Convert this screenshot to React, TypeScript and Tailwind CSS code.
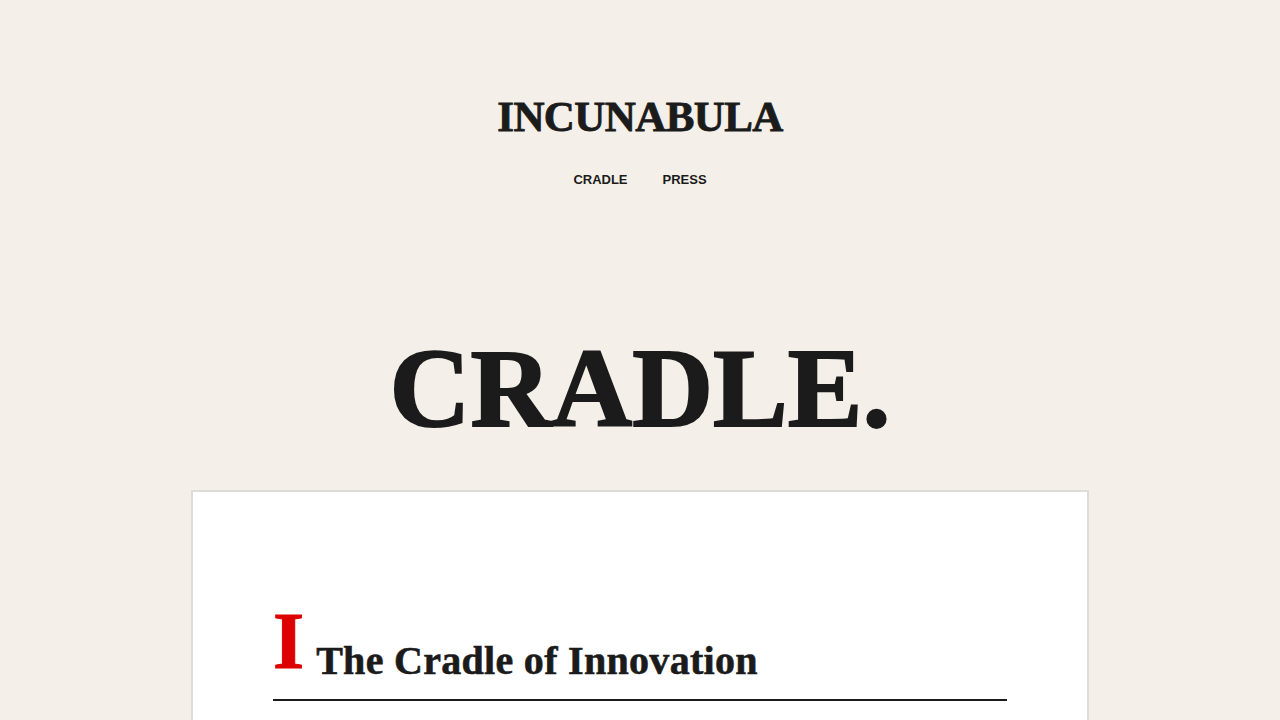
import React from "react";

// ── Header ──────────────────────────────────────────────────────────────────

function SiteHeader() {
  return (
    <header className="flex flex-col items-center pt-[93px]">
      <h1 className="font-['Liberation_Serif',serif] text-[43px] font-bold leading-[48px] tracking-[-0.6px] text-[#1b1b1b] [-webkit-text-stroke:0.8px_#1b1b1b]">
        INCUNABULA
      </h1>
      <nav className="mt-[31px] flex gap-[35px] font-['Liberation_Sans',Arial,sans-serif] text-[13px] font-bold leading-4 text-[#1b1b1b]">
        <a href="#">CRADLE</a>
        <a href="#">PRESS</a>
      </nav>
    </header>
  );
}

// ── Page ────────────────────────────────────────────────────────────────────

export default function App() {
  return (
    <div className="min-h-screen bg-[#f4f0e9] pb-24 text-[#1b1b1b]">
      <SiteHeader />

      <h2 className="mt-[140px] text-center font-['Liberation_Serif',serif] text-[112px] font-bold leading-[120px] text-[#1b1b1b] [-webkit-text-stroke:2px_#1b1b1b]">
        CRADLE.
      </h2>

      <article className="mx-auto mt-[42px] min-h-[400px] w-[898px] border-2 border-[#dedcd8] bg-white px-[80px] pt-[109px] pb-20">
        <div className="flex items-end gap-[12px] border-b-2 border-[#1b1b1b] pb-[18px]">
          <span className="font-['Liberation_Serif',serif] text-[80px] font-bold leading-[80px] text-[#dd0000] [-webkit-text-stroke:1px_#dd0000]">
            I
          </span>
          <h3 className="font-['Liberation_Serif',serif] text-[40px] font-bold leading-[40px] tracking-[0.3px] text-[#1b1b1b] [-webkit-text-stroke:0.6px_#1b1b1b]">
            The Cradle of Innovation
          </h3>
        </div>
      </article>
    </div>
  );
}
